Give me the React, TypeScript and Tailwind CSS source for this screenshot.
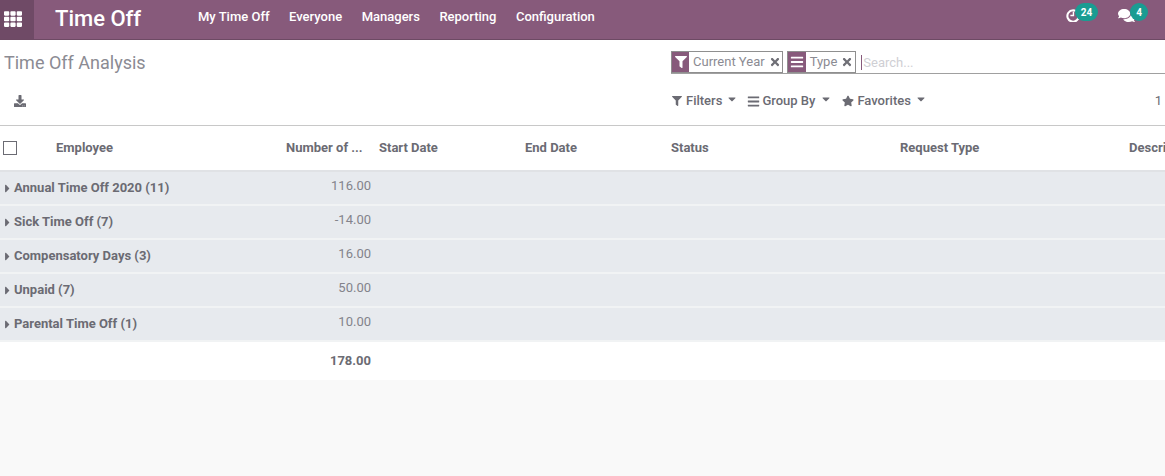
import { FaFilter, FaBars, FaTimes, FaStar, FaDownload, FaCaretRight, FaCaretDown, FaTh, FaComments } from "react-icons/fa";

const navItems = ["My Time Off", "Everyone", "Managers", "Reporting", "Configuration"];

const groups = [
  { name: "Annual Time Off 2020 (11)", value: "116.00" },
  { name: "Sick Time Off (7)", value: "-14.00" },
  { name: "Compensatory Days (3)", value: "16.00" },
  { name: "Unpaid (7)", value: "50.00" },
  { name: "Parental Time Off (1)", value: "10.00" },
];

function Badge({ children, className }: { children: string; className: string }) {
  return (
    <span className={`absolute flex h-[18px] items-center justify-center rounded-full bg-[#1a9c92] text-[10px] font-bold text-white ${className}`}>
      {children}
    </span>
  );
}

function Facet({ icon, label, iconClass, endClass }: { icon: React.ReactNode; label: string; iconClass: string; endClass: string }) {
  return (
    <div className="flex h-[22px] items-center border border-[#8f8f8f] bg-white text-[13px] text-[#8b8b93]">
      <span className={`flex h-full items-center justify-center bg-[#875a7b] text-white ${iconClass}`}>{icon}</span>
      <span className="ml-[4px]">{label}</span>
      <FaTimes className={`ml-[4px] text-[12px] text-[#6f6f76] ${endClass}`} />
    </div>
  );
}

export default function App() {
  return (
    <div className="flex h-[476px] w-[1165px] flex-col overflow-hidden bg-[#f9f9f9] font-['Roboto',sans-serif]">
      <header className="flex h-10 shrink-0 items-center border-b border-[#6d4a64] bg-[#875a7b] text-white">
        <div className="flex h-full w-[34px] items-center bg-[#6f4a66] pl-1">
          <FaTh className="-translate-y-[1px] text-[18px]" />
        </div>
        <div className="ml-[21px] w-[143px] -translate-y-[1px] text-[22px] font-medium leading-none">Time Off</div>
        <nav className="flex -translate-y-[3px] gap-[19.5px] text-[13px] font-medium">
          {navItems.map((item) => (
            <span key={item}>{item}</span>
          ))}
        </nav>
        <div className="relative ml-auto h-full w-[100px]">
          <svg viewBox="0 0 16 16" className="absolute left-[1px] top-[8px] h-[14px] w-[14px]" fill="none" stroke="white">
            <path d="M13.5 5.5A6.5 6.5 0 1 0 14.5 8" strokeWidth="2.4" />
            <path d="M8.5 4v4.5H5" strokeWidth="1.6" />
          </svg>
          <Badge className="left-[10px] top-[3px] w-[23px]">24</Badge>
          <FaComments className="absolute left-[53px] top-[7px] text-[17px]" />
          <Badge className="left-[65px] top-[3px] w-[18px]">4</Badge>
        </div>
      </header>

      <section className="h-[86px] shrink-0 border-b border-[#c8c8c8] bg-white">
        <div className="flex h-[51px]">
          <h1 className="ml-1 mt-[10px] w-[667px] text-[18px] leading-[26px] text-[#8b8b93]">Time Off Analysis</h1>
          <div className="mt-[11px] flex h-[23px] flex-1 gap-[4px] border-b border-[#a0a0a0]">
            <Facet icon={<FaFilter className="text-[12px]" />} label="Current Year" iconClass="w-[17px]" endClass="mr-[1px]" />
            <Facet icon={<FaBars className="text-[14px]" />} label="Type" iconClass="w-[18px]" endClass="mr-[2px]" />
            <div className="ml-[1px] flex items-center text-[13px] leading-[15px] text-[#cfcfd4]">
              <span className="h-[15px] border-l border-[#875a7b] pl-px">Search...</span>
            </div>
          </div>
        </div>
        <div className="flex h-[20px] items-center text-[13px] font-medium text-[#6b6b73]">
          <FaDownload className="ml-[14px] text-[12px]" />
          <FaFilter className="ml-[646px] text-[10px]" />
          <span className="ml-[4px]">Filters</span>
          <FaCaretDown className="ml-[4px] -translate-y-[2px] text-[12px]" />
          <FaBars className="ml-[9px] text-[13px]" />
          <span className="ml-[2px]">Group By</span>
          <FaCaretDown className="ml-[5px] -translate-y-[2px] text-[12px]" />
          <FaStar className="ml-[10px] text-[12px]" />
          <span className="ml-[3px]">Favorites</span>
          <FaCaretDown className="ml-[4px] -translate-y-[2px] text-[12px]" />
          <span className="ml-auto mr-[3px] font-normal">1</span>
        </div>
      </section>

      <div className="bg-white">
        <div className="grid h-[46px] grid-cols-[56px_230px_93px_146px_146px_229px_229px_36px] items-center border-b-2 border-[#e0e2e5] pb-px text-[13px] font-bold text-[#6b6b73]">
          <span className="ml-[3px] h-[14px] w-[14px] border border-[#6b6b73] bg-white" />
          <span>Employee</span>
          <span>Number of ...</span>
          <span>Start Date</span>
          <span>End Date</span>
          <span>Status</span>
          <span>Request Type</span>
          <span className="overflow-hidden whitespace-nowrap">Descri</span>
        </div>
        {groups.map((g) => (
          <div key={g.name} className="flex h-[34px] items-center border-b-2 border-[#f1f3f4] bg-[#e7eaee] text-[13px] text-[#6b6b73]">
            <FaCaretRight className="ml-[1px] text-[13px]" />
            <span className="w-[291px] font-bold">{g.name}</span>
            <span className="w-[66px] -translate-y-[2px] text-right text-[#83838b]">{g.value}</span>
          </div>
        ))}
        <div className="flex h-[38px] items-center text-[13px] font-bold text-[#6b6b73]">
          <span className="w-[371px] text-right">178.00</span>
        </div>
      </div>
    </div>
  );
}
